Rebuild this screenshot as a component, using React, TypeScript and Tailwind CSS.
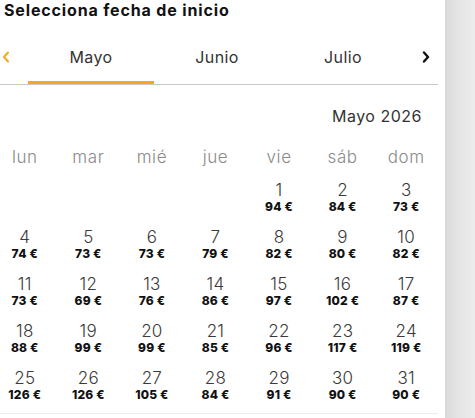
const WEEKDAYS = ['lun', 'mar', 'mié', 'jue', 'vie', 'sáb', 'dom'];

// May 2026 starts on a Friday
const PRICES: Record<number, number> = {
  1: 94, 2: 84, 3: 73,
  4: 74, 5: 73, 6: 73, 7: 79, 8: 82, 9: 80, 10: 82,
  11: 73, 12: 69, 13: 76, 14: 86, 15: 97, 16: 102, 17: 87,
  18: 88, 19: 99, 20: 99, 21: 85, 22: 96, 23: 117, 24: 119,
  25: 126, 26: 126, 27: 105, 28: 84, 29: 91, 30: 90, 31: 90,
};

const FIRST_OFFSET = 4;

function Chevron({ dir, className }: { dir: 'left' | 'right'; className?: string }) {
  return (
    <svg width="8" height="12" viewBox="0 0 8 12" className={className} fill="none">
      {dir === 'left' ? (
        <path d="M6 1.5 2 6l4 4.5" stroke="currentColor" strokeWidth="2" strokeLinecap="round" strokeLinejoin="round" />
      ) : (
        <path d="M2 1.5 6 6l-4 4.5" stroke="currentColor" strokeWidth="2.4" strokeLinecap="round" strokeLinejoin="round" />
      )}
    </svg>
  );
}

function DayCell({ day }: { day: number }) {
  return (
    <div className="flex flex-col items-center h-[47px]">
      <span className="text-[17px] leading-[19px] font-light tracking-[0.3px] text-[#3a3a3a]">{day}</span>
      <span className="text-[12px] leading-[13px] font-extrabold tracking-[0.2px] text-[#111]">
        {PRICES[day]} €
      </span>
    </div>
  );
}

export default function App() {
  const cells: (number | null)[] = [
    ...Array.from({ length: FIRST_OFFSET }, () => null),
    ...Array.from({ length: 31 }, (_, i) => i + 1),
  ];

  return (
    <div
      className="flex w-[475px] h-[418px] overflow-hidden bg-white"
      style={{ fontFamily: 'Inter, "Noto Sans", sans-serif' }}
    >
      <div className="w-[445px] shrink-0 flex flex-col">
        <div className="w-[438px] flex flex-col">
          <h1 className="pl-[4px] pt-[1px] text-[16px] leading-[18px] font-bold tracking-[0.85px] text-[#111]">
            Selecciona fecha de inicio
          </h1>

          <div className="mt-[11px] flex items-stretch border-b border-[#c9c9c9] h-[55px]">
            <button className="w-[28px] flex items-center pl-[2px] text-[#f5a81f]">
              <Chevron dir="left" />
            </button>
            <div className="w-[126px] flex items-center justify-center border-b-[3px] border-[#f5a81f] pt-[3px] text-[16px] tracking-[0.4px] text-[#333]">
              Mayo
            </div>
            <div className="w-[126px] flex items-center justify-center border-b-[3px] border-transparent pt-[3px] text-[16px] tracking-[0.4px] text-[#333]">
              Junio
            </div>
            <div className="w-[126px] flex items-center justify-center border-b-[3px] border-transparent pt-[3px] text-[16px] tracking-[0.4px] text-[#333]">
              Julio
            </div>
            <button className="flex-1 flex items-center justify-end pr-[8px] text-[#111]">
              <Chevron dir="right" />
            </button>
          </div>

          <div className="mt-[21px] pr-[16px] text-right text-[16px] leading-[20px] tracking-[0.5px] text-[#333]">
            Mayo 2026
          </div>

          <div className="grid grid-cols-7 w-[445px] -ml-[7px] mt-[21px]">
            {WEEKDAYS.map(d => (
              <div key={d} className="text-center text-[17px] leading-[20px] font-light tracking-[0.6px] text-[#8a8a8a]">
                {d}
              </div>
            ))}
          </div>

          <div className="grid grid-cols-7 w-[445px] -ml-[7px] mt-[14px]">
            {cells.map((day, i) => (day ? <DayCell key={i} day={day} /> : <div key={i} className="h-[47px]" />))}
          </div>

          <div className="mt-[-3px] border-b border-[#eeeeee]" />
        </div>
      </div>
      <div className="flex-1 bg-gradient-to-r from-[#d9d9d9] via-[#e6e6e6] to-[#ececec]" />
    </div>
  );
}
